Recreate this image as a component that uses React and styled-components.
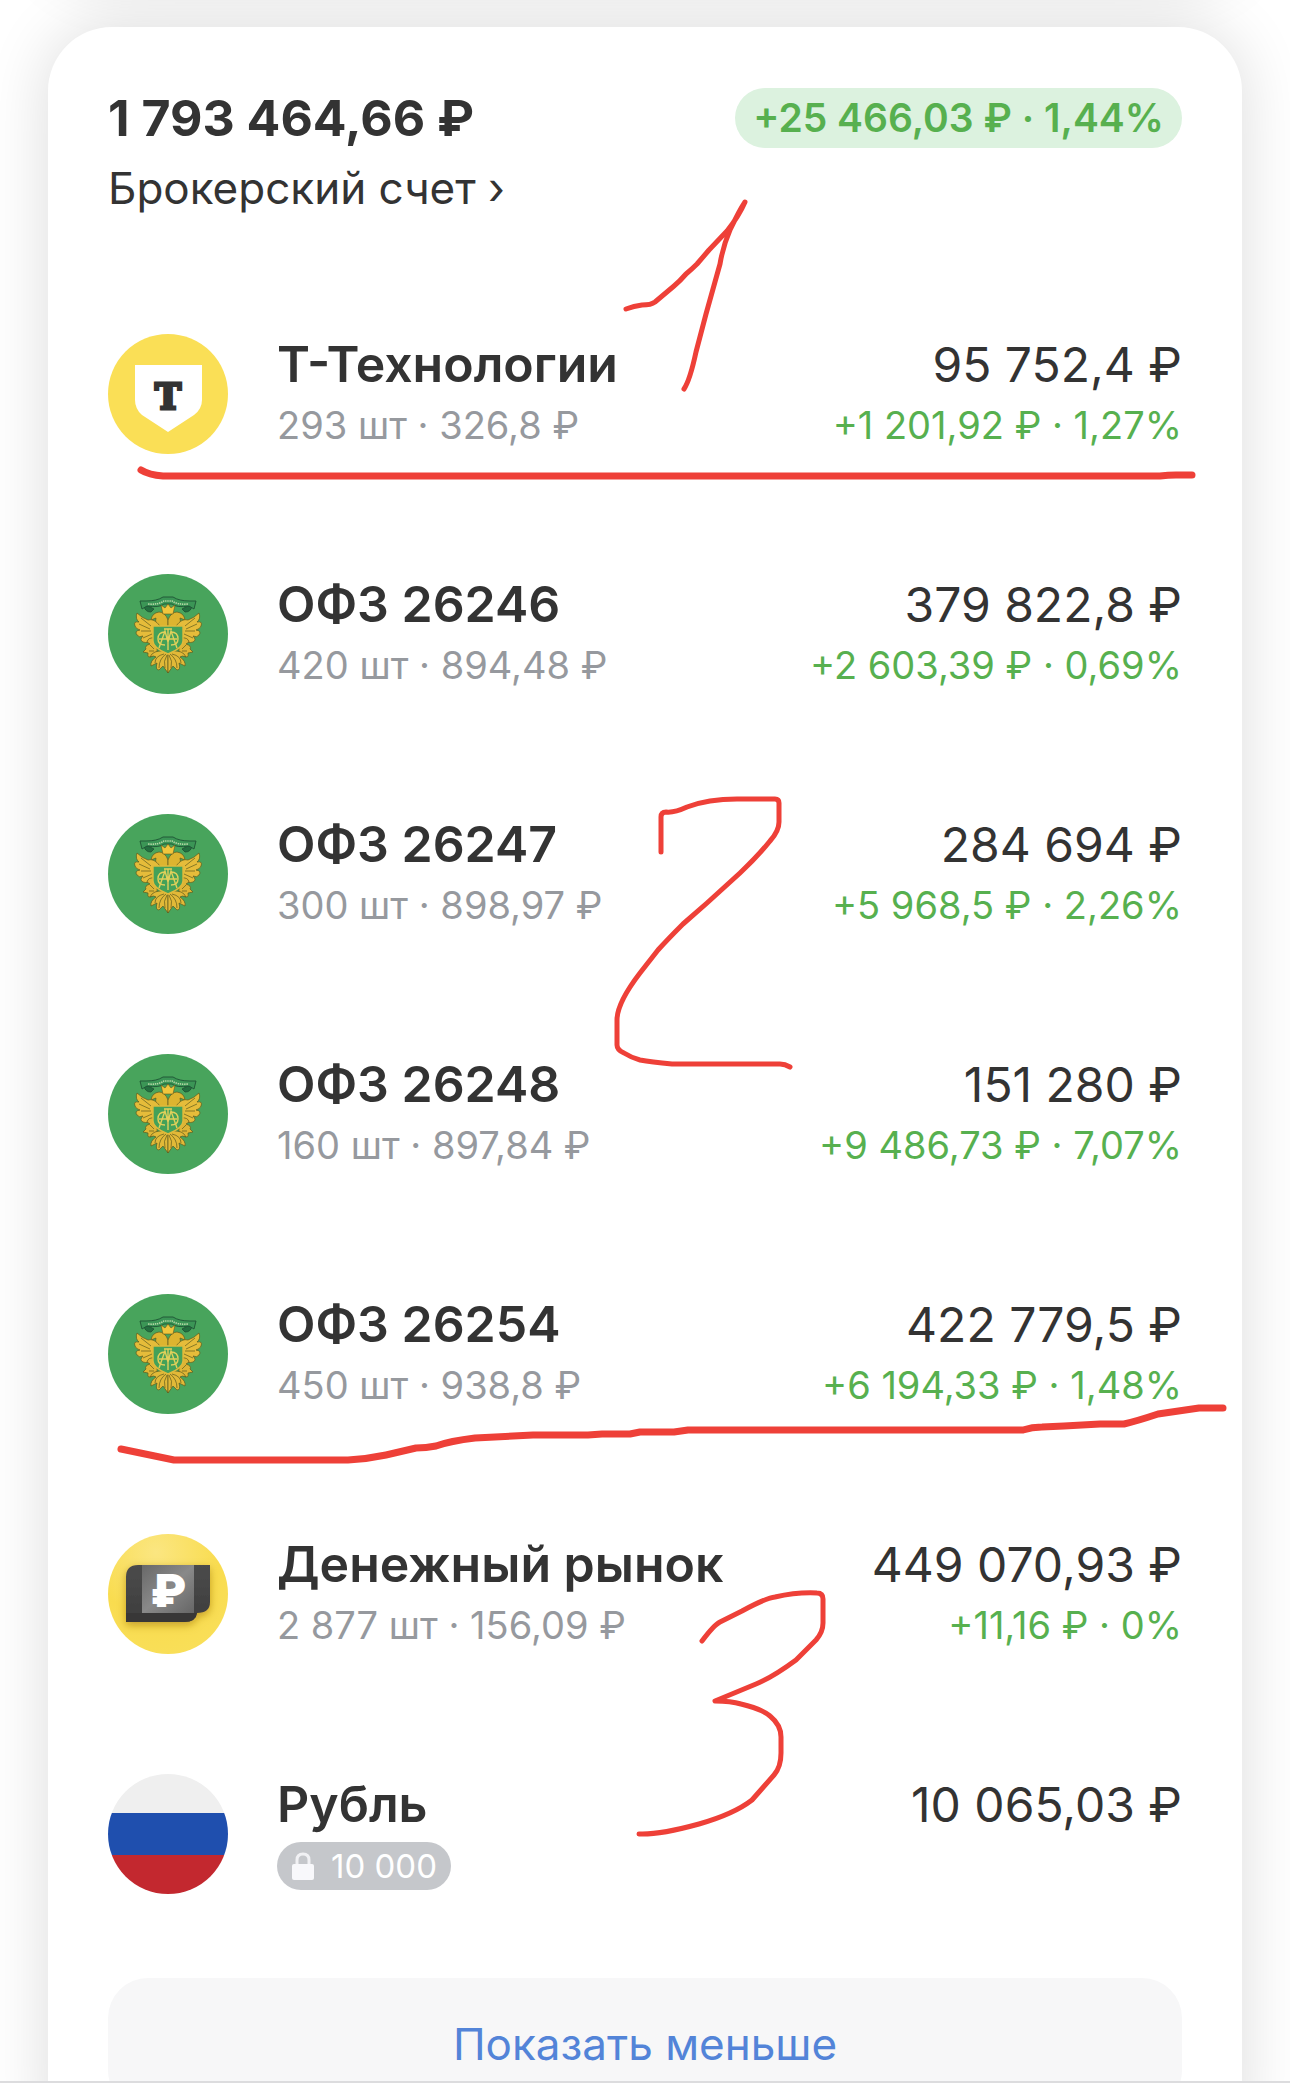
import React from 'react';
import styled, { createGlobalStyle } from 'styled-components';

const holdings = [
  { icon: 'tbank', name: 'Т-Технологии', details: '293 шт · 326,8 ₽', value: '95 752,4 ₽', profit: '+1 201,92 ₽ · 1,27%' },
  { icon: 'bond', name: 'ОФЗ 26246', details: '420 шт · 894,48 ₽', value: '379 822,8 ₽', profit: '+2 603,39 ₽ · 0,69%' },
  { icon: 'bond', name: 'ОФЗ 26247', details: '300 шт · 898,97 ₽', value: '284 694 ₽', profit: '+5 968,5 ₽ · 2,26%' },
  { icon: 'bond', name: 'ОФЗ 26248', details: '160 шт · 897,84 ₽', value: '151 280 ₽', profit: '+9 486,73 ₽ · 7,07%' },
  { icon: 'bond', name: 'ОФЗ 26254', details: '450 шт · 938,8 ₽', value: '422 779,5 ₽', profit: '+6 194,33 ₽ · 1,48%' },
  { icon: 'market', name: 'Денежный рынок', details: '2 877 шт · 156,09 ₽', value: '449 070,93 ₽', profit: '+11,16 ₽ · 0%' },
  { icon: 'ruble', name: 'Рубль', locked: '10 000', value: '10 065,03 ₽' },
];

const TBankIcon = () => (
  <Icon viewBox="0 0 120 120" aria-hidden="true">
    <circle cx="60" cy="60" r="60" fill="#fadf56" />
    <path d="M27 31H94V66Q94 75 86 81L60 98L34 81Q27 75 27 66Z" fill="#fff" />
    <LogoLetter x="60" y="75">Т</LogoLetter>
  </Icon>
);

// one half of the eagle, the other one is mirrored
const EagleHalf = () => (
  <g stroke="#5d5a1c" strokeWidth="0.7" strokeLinejoin="round">
    <path d="M60 46Q57 38 51 38Q44 39 43 46L48 44Q46 51 53 53L60 53Z" fill="#ddb42f" />
    <path d="M52 52Q46 44 40 46Q34 44 29 39Q27 45 31 48Q25 47 27 52Q28 55 32 56Q26 57 29 61Q31 64 35 62Q31 66 35 68Q40 70 46 65L49 60Z" fill="#e5bc3a" />
    <path d="M33 44L43 52M31 50L42 55M33 57L43 57M35 64L44 60" fill="none" />
    <path d="M47 64Q40 63 39 68L42 70Q36 72 38 75L35 78L40 79Q39 85 44 82Q50 81 49 74Z" fill="#deb535" />
    <path d="M56 77Q45 76 42 83Q46 81 48 83Q42 87 43 92L49 89Q47 96 51 96L55 92L60 99V78Z" fill="#e2b938" />
    <path d="M56 80Q47 82 47 89M58 80Q51 85 51 94M59 81Q55 87 57 94" fill="none" />
    <path d="M42 71L46 75M41 77L46 77" fill="none" />
  </g>
);

const BondIcon = () => (
  <Icon viewBox="0 0 120 120" aria-hidden="true">
    <circle cx="60" cy="60" r="60" fill="#48a45c" />
    <EagleHalf />
    <g transform="translate(120 0) scale(-1 1)">
      <EagleHalf />
    </g>
    <g stroke="#1f5434" strokeWidth="0.9" strokeLinejoin="round">
      <path d="M36 32Q37 38 43 38L46 35L38 31ZM84 32Q83 38 77 38L74 35L82 31Z" fill="#23703f" />
      <path d="M32 27H38Q49 27 55 23H65Q71 27 82 27H88L86 35L81 32Q69 34 64 30H56Q51 34 39 32L34 35Z" fill="#3b9656" />
    </g>
    <path d="M40 30Q50 31 56 27H64Q70 31 80 30" fill="none" stroke="#b4d6a4" strokeWidth="1.6" strokeDasharray="1.4 0.8" />
    <path d="M53 31L57 34L60 30L63 34L67 31L65 40H55Z" fill="#f1c63d" stroke="#6b5718" strokeWidth="0.6" />
    <path d="M45 52H75V67Q75 74 60 80Q45 74 45 67Z" fill="#43a159" stroke="#e0ba3b" strokeWidth="1.4" />
    <g fill="none" stroke="#e0d05a" strokeWidth="1.4">
      <path d="M60 55V76M56 55H64M51 74L57 57L60 68L63 57L69 74M51 65H69" />
      <path d="M57 58Q50 58 50 65Q50 71 57 71M63 58Q70 58 70 65Q70 71 63 71" />
    </g>
  </Icon>
);

const MarketIcon = () => (
  <Icon viewBox="0 0 120 120" aria-hidden="true">
    <defs>
      <linearGradient id="face" x1="0" y1="0" x2="1" y2="1">
        <stop offset="0" stopColor="#686868" />
        <stop offset="0.5" stopColor="#898989" />
        <stop offset="1" stopColor="#666" />
      </linearGradient>
      <linearGradient id="side" x1="0" y1="0" x2="0" y2="1">
        <stop offset="0" stopColor="#4b4b4b" />
        <stop offset="1" stopColor="#3d3d3d" />
      </linearGradient>
      <radialGradient id="coin" cx="0.4" cy="0.15" r="0.9">
        <stop offset="0" stopColor="#fbe681" />
        <stop offset="0.6" stopColor="#f9dc4f" />
        <stop offset="1" stopColor="#f9df59" />
      </radialGradient>
      <filter id="drop" x="-20%" y="-20%" width="140%" height="150%">
        <feDropShadow dx="0" dy="3" stdDeviation="4" floodColor="#a47c10" floodOpacity="0.65" />
      </filter>
    </defs>
    <circle cx="60" cy="60" r="60" fill="url(#coin)" />
    <path d="M18 43Q18 31 30 31H102V68Q102 79 89 79Q88 88 76 88H18Z" fill="url(#side)" filter="url(#drop)" />
    <path d="M18 79H89Q88 88 76 88H18Z" fill="#383737" />
    <path d="M34 31H86V79H34Z" fill="url(#face)" />
    <CoinSign x="60" y="73">₽</CoinSign>
  </Icon>
);

const RubleIcon = () => (
  <Icon viewBox="0 0 120 120" aria-hidden="true">
    <clipPath id="round">
      <circle cx="60" cy="60" r="60" />
    </clipPath>
    <g clipPath="url(#round)">
      <rect width="120" height="39" fill="#efefef" />
      <rect y="39" width="120" height="42" fill="#1f4fae" />
      <rect y="81" width="120" height="39" fill="#c3282f" />
    </g>
  </Icon>
);

const LockIcon = () => (
  <Lock viewBox="0 0 24 30" aria-hidden="true">
    <path d="M6 14V9Q6 3 12 3Q18 3 18 9V14" fill="none" stroke="#f1f1f4" strokeWidth="3" />
    <rect x="1" y="13" width="22" height="16" rx="2" fill="#f8f8fb" />
  </Lock>
);

const Marks = () => (
  <MarksLayer viewBox="0 0 1290 2083" aria-hidden="true">
    <g strokeWidth="5">
      <path d="M626 309Q634 306 642 305Q651 305 655 302L674 286Q680 281 686 274Q692 269 697 264L709 250L727 231Q739 216 745 202Q739 211 730 230Q723 246 720 264L706 314L696 352Q690 380 684 389" />
      <path d="M661 852V817Q661 812 666 812Q674 813 687 807Q708 799 737 799H775Q779 799 779 803V822Q779 831 770 841Q758 856 740 873L707 903L683 924Q668 939 658 950L640 973Q617 1003 617 1020V1045Q617 1050 624 1053Q632 1058 640 1060Q651 1062 672 1064H780Q785 1064 790 1067" />
      <path d="M702 1641Q714 1625 720 1622L742 1611Q766 1598 775 1597Q797 1592 817 1593Q823 1593 823 1599V1623Q823 1632 816 1640L796 1660Q773 1677 756 1684L715 1701Q731 1701 741 1704Q762 1709 770 1716Q781 1725 781 1737V1753Q781 1767 774 1775L752 1800Q734 1814 699 1824Q659 1835 639 1834" />
    </g>
    <g strokeWidth="7">
      <path d="M141 470Q149 475 163 476H1160Q1168 475 1176 475H1192" />
      <path d="M121 1449L174 1460H348Q367 1459 386 1455L416 1448Q426 1448 436 1446Q450 1441 475 1438L533 1435H588L602 1434H630L640 1432H674L688 1430H1023Q1032 1427 1042 1427L1064 1426L1100 1424H1124Q1137 1421 1158 1414Q1179 1411 1199 1408H1223" />
    </g>
  </MarksLayer>
);

const icons = {
  tbank: TBankIcon,
  bond: BondIcon,
  market: MarketIcon,
  ruble: RubleIcon,
};

const Holding = ({ icon, name, details, locked, value, profit }) => {
  const HoldingIcon = icons[icon];
  return (
    <Row>
      <HoldingIcon />
      <Column>
        <Name>{name}</Name>
        {details && <Details>{details}</Details>}
        {locked && (
          <Details>
            <LockedPill>
              <LockIcon />
              {locked}
            </LockedPill>
          </Details>
        )}
      </Column>
      <Column $end>
        <Value>{value}</Value>
        {profit && <Profit>{profit}</Profit>}
      </Column>
    </Row>
  );
};

const App = () => {
  return (
    <Screen>
      <GlobalStyle />
      <Card>
        <Header>
          <Total>1 793 464,66 ₽</Total>
          <Badge>+25 466,03 ₽ · 1,44%</Badge>
        </Header>
        <AccountLink href="#account">Брокерский счет ›</AccountLink>
        <List>
          {holdings.map((item) => (
            <Holding key={item.name} {...item} />
          ))}
        </List>
        <LessButton type="button">Показать меньше</LessButton>
      </Card>
      <Marks />
    </Screen>
  );
};

const GlobalStyle = createGlobalStyle`
  * {
    box-sizing: border-box;
  }
  body {
    margin: 0;
    background: #fff;
    color: #333;
    font-family: Inter, "Liberation Sans", sans-serif;
  }
`;

const Screen = styled.main`
  position: relative;
  height: 100vh;
  overflow: hidden;
  padding: 27px 48px 0;
  border-bottom: 2px solid #dcdcde;
`;

const Card = styled.section`
  position: relative;
  padding: 61px 60px;
  border-radius: 64px;
  background: #fff;
  box-shadow: 0 0 64px rgba(0, 0, 0, 0.14);

  /* shadow of the card above, scrolled out of view */
  &::before {
    content: "";
    position: absolute;
    z-index: -1;
    right: 0;
    bottom: calc(100% + 48px);
    left: 0;
    height: 400px;
    border-radius: 64px;
    box-shadow: 0 0 64px rgba(0, 0, 0, 0.14);
  }
`;

const Header = styled.header`
  display: flex;
  align-items: center;
  justify-content: space-between;
`;

const Total = styled.h1`
  margin: 0;
  font-size: 50px;
  font-weight: 700;
  line-height: 60px;
`;

const Badge = styled.span`
  padding: 0 18px;
  border-radius: 30px;
  background: #dcf2df;
  color: #57b04f;
  font-size: 39px;
  font-weight: 600;
  line-height: 60px;
`;

const AccountLink = styled.a`
  display: block;
  width: fit-content;
  margin-top: 10px;
  color: #333;
  font-size: 44px;
  line-height: 60px;
  text-decoration: none;
`;

const List = styled.ul`
  display: flex;
  flex-direction: column;
  gap: 118px;
  margin: 116px 0 82px;
  padding: 0;
  list-style: none;
`;

const Row = styled.li`
  display: flex;
`;

const Icon = styled.svg`
  flex: none;
  width: 120px;
  height: 120px;
  margin-right: 49px;
`;

const Column = styled.div`
  display: flex;
  flex-direction: column;
  align-items: ${({ $end }) => ($end ? 'flex-end' : 'flex-start')};
  margin-left: ${({ $end }) => ($end ? 'auto' : '0')};
  line-height: 61px;
  white-space: nowrap;
`;

const Name = styled.span`
  font-size: 50px;
  font-weight: 600;
`;

const Value = styled.span`
  font-size: 48px;
`;

const Details = styled.span`
  display: flex;
  align-items: center;
  height: 61px;
  color: #96999e;
  font-size: 38px;
`;

const Profit = styled.span`
  color: #57b04f;
  font-size: 38px;
`;

const LockedPill = styled.span`
  display: flex;
  align-items: center;
  gap: 16px;
  padding: 0 14px;
  border-radius: 24px;
  background: #c5c7cb;
  color: #fff;
  font-size: 33px;
  line-height: 48px;
`;

const Lock = styled.svg`
  width: 24px;
  height: 30px;
`;

const LessButton = styled.button`
  width: 100%;
  height: 132px;
  border: 0;
  border-radius: 40px;
  background: #f7f7f8;
  color: #5384d8;
  font-family: inherit;
  font-size: 44px;
`;

const LogoLetter = styled.text`
  fill: #333;
  stroke: #333;
  stroke-width: 3px;
  font-family: "DejaVu Serif", serif;
  font-size: 35px;
  font-weight: 700;
  text-anchor: middle;
`;

const CoinSign = styled.text`
  fill: #fff;
  font-size: 46px;
  font-weight: 900;
  text-anchor: middle;
`;

const MarksLayer = styled.svg`
  position: absolute;
  top: 0;
  left: 0;
  width: 100%;
  fill: none;
  stroke: #ee4038;
  stroke-linecap: round;
  stroke-linejoin: round;
  pointer-events: none;
`;

export default App;
